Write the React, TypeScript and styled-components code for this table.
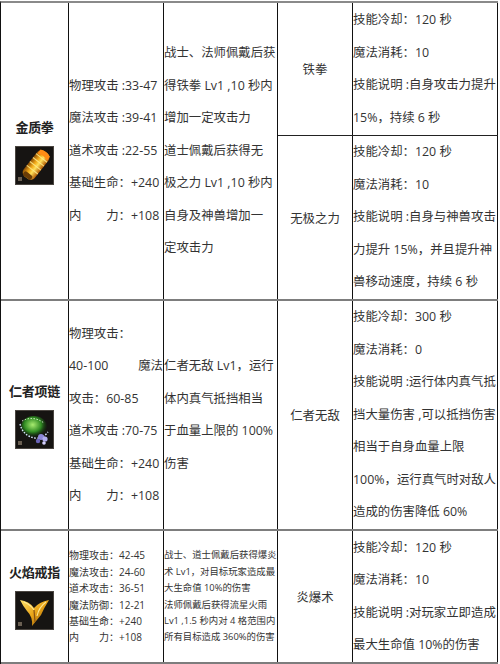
import styled, { createGlobalStyle } from 'styled-components';

const GlobalStyle = createGlobalStyle`
	html, body {
		margin: 0;
		padding: 0;
		background: #fff;
	}
	body {
		font-family: "Open Sans", "Noto Sans CJK SC", sans-serif;
		color: #333;
	}
`;

interface SkillInfo {
	name: string;
	height: number;
	lines: string[];
}

interface ItemInfo {
	name: string;
	icon: 'fist' | 'necklace' | 'ring';
	height: number;
	small?: boolean;
	stats: string[];
	effect: string[];
	skills: SkillInfo[];
}

const ITEMS: ItemInfo[] = [
	{
		name: '金质拳',
		icon: 'fist',
		height: 298,
		stats: ['物理攻击 :33-47', '魔法攻击 :39-41', '道术攻击 :22-55', '基础生命：+240', '内　　力：+108'],
		effect: [
			'战士、法师佩戴后获',
			'得铁拳 Lv1 ,10 秒内',
			'增加一定攻击力',
			'道士佩戴后获得无',
			'极之力 Lv1 ,10 秒内',
			'自身及神兽增加一',
			'定攻击力',
		],
		skills: [
			{
				name: '铁拳',
				height: 133,
				lines: ['技能冷却：120 秒', '魔法消耗：10', '技能说明 :自身攻击力提升', '15%，持续 6 秒'],
			},
			{
				name: '无极之力',
				height: 163,
				lines: [
					'技能冷却：120 秒',
					'魔法消耗：10',
					'技能说明 :自身与神兽攻击',
					'力提升 15%，并且提升神',
					'兽移动速度，持续 6 秒',
				],
			},
		],
	},
	{
		name: '仁者项链',
		icon: 'necklace',
		height: 230,
		stats: ['物理攻击：', '40-100|魔法', '攻击：60-85', '道术攻击 :70-75', '基础生命：+240', '内　　力：+108'],
		effect: ['仁者无敌 Lv1，运行', '体内真气抵挡相当', '于血量上限的 100%', '伤害'],
		skills: [
			{
				name: '仁者无敌',
				height: 228,
				lines: [
					'技能冷却：300 秒',
					'魔法消耗：0',
					'技能说明 :运行体内真气抵',
					'挡大量伤害 ,可以抵挡伤害',
					'相当于自身血量上限',
					'100%，运行真气时对敌人',
					'造成的伤害降低 60%',
				],
			},
		],
	},
	{
		name: '火焰戒指',
		icon: 'ring',
		height: 133,
		small: true,
		stats: ['物理攻击：42-45', '魔法攻击：24-60', '道术攻击：36-51', '魔法防御：12-21', '基础生命：+240', '内　　力：+108'],
		effect: [
			'战士、道士佩戴后获得爆炎',
			'术 Lv1，对目标玩家造成最',
			'大生命值 10%的伤害',
			'法师佩戴后获得流星火雨',
			'Lv1 ,1.5 秒内对 4 格范围内',
			'所有目标造成 360%的伤害',
		],
		skills: [
			{
				name: '炎爆术',
				height: 131,
				lines: ['技能冷却：120 秒', '魔法消耗：10', '技能说明 :对玩家立即造成', '最大生命值 10%的伤害'],
			},
		],
	},
];

const ItemIcon = ({ kind }: { kind: ItemInfo['icon'] }) => (
	<svg width="39" height="39" viewBox="0 0 39 39">
		<defs>
			<linearGradient id="gold" x1="0" y1="0" x2="1" y2="0">
				<stop offset="0" stopColor="#8a4e06" />
				<stop offset="0.35" stopColor="#f0a818" />
				<stop offset="0.6" stopColor="#ffe05a" />
				<stop offset="1" stopColor="#b45e08" />
			</linearGradient>
			<linearGradient id="ringGold" x1="0" y1="0" x2="1" y2="1">
				<stop offset="0" stopColor="#ffe36a" />
				<stop offset="0.5" stopColor="#e9a417" />
				<stop offset="1" stopColor="#8a5208" />
			</linearGradient>
			<radialGradient id="jade" cx="0.45" cy="0.4" r="0.6">
				<stop offset="0" stopColor="#a8ec70" />
				<stop offset="0.55" stopColor="#2f8a22" />
				<stop offset="1" stopColor="#0d2a0a" stopOpacity="0" />
			</radialGradient>
		</defs>
		<rect x="0.5" y="0.5" width="38" height="38" fill="#161412" stroke="#4a4540" />
		{kind === 'fist' && (
			<g transform="rotate(38 21 19)">
				<rect x="14" y="3" width="14" height="32" rx="5" fill="url(#gold)" />
				<path d="M14 10 H28 M14 15 H28 M14 20 H28 M14 25 H28" stroke="#ffec8c" strokeWidth="1.1" opacity="0.85" />
				<path d="M15 4 Q21 1 27 4 L27 9 Q21 6 15 9 Z" fill="#ff8c14" />
				<rect x="16" y="30" width="10" height="5" rx="2" fill="#6a3c06" />
			</g>
		)}
		{kind === 'necklace' && (
			<g>
				<ellipse cx="19" cy="17" rx="13" ry="11" fill="url(#jade)" />
				<path d="M5 14 Q8 26 20 28 Q28 29 33 22" stroke="#d8e8ff" strokeWidth="1.4" strokeDasharray="1.6 1.4" fill="none" />
				<path d="M7 11 Q18 5 29 13" stroke="#e8ffe0" strokeWidth="1" strokeDasharray="1.4 1.6" fill="none" />
				<circle cx="26" cy="27" r="3" fill="#8d86d8" />
				<circle cx="30" cy="29" r="2.6" fill="#b2aef0" />
				<circle cx="23" cy="31" r="2.2" fill="#6b64b8" />
				<circle cx="29" cy="33" r="1.8" fill="#d6d2ff" />
			</g>
		)}
		{kind === 'ring' && (
			<g>
				<path d="M5 9 Q14 10 19 17 Q24 11 34 9 Q29 17 26 24 L17 35 Q18 26 12 20 Q8 15 5 9 Z" fill="url(#ringGold)" />
				<path d="M9 11 Q16 14 19 19 M31 11 Q24 16 22 25" stroke="#fff2a8" strokeWidth="1.1" fill="none" opacity="0.85" />
				<path d="M19 19 L20 31" stroke="#8a5210" strokeWidth="1.2" />
			</g>
		)}
		<rect x="3" y="31" width="4" height="4" fill="#6a5f52" />
	</svg>
);

const App = () => (
	<>
		<GlobalStyle />
		<Table>
			{ITEMS.map((item) => (
				<ItemRow key={item.name} $height={item.height}>
					<NameCell>
						<ItemName>{item.name}</ItemName>
						<ItemIcon kind={item.icon} />
					</NameCell>
					<TextCell $width={95} $small={item.small}>
						{item.stats.map((line) =>
							line.includes('|') ? (
								<SpreadLine key={line}>
									{line.split('|').map((part) => (
										<span key={part}>{part}</span>
									))}
								</SpreadLine>
							) : (
								<Line key={line}>{line}</Line>
							),
						)}
					</TextCell>
					<TextCell $width={114} $small={item.small} $tight={item.small}>
						{item.effect.map((line) => (
							<Line key={line}>{line}</Line>
						))}
					</TextCell>
					<SkillStack>
						{item.skills.map((skill, i) => (
							<SkillRow key={skill.name} $height={skill.height} $divider={i < item.skills.length - 1}>
								<SkillName>{skill.name}</SkillName>
								<TextCell $width={145}>
									{skill.lines.map((line) => (
										<Line key={line}>{line}</Line>
									))}
								</TextCell>
							</SkillRow>
						))}
					</SkillStack>
				</ItemRow>
			))}
		</Table>
	</>
);

export default App;

const Table = styled.div`
	width: 498px;
	margin-top: 1px;
	display: flex;
	flex-direction: column;
	border-top: 2px solid #8a8a8a;
	border-left: 1px solid #111;
	box-sizing: border-box;
`;

const ItemRow = styled.div<{ $height: number }>`
	display: flex;
	height: ${(p) => p.$height}px;
	border-bottom: 2px solid #7d7d7d;
	box-sizing: border-box;
`;

const NameCell = styled.div`
	width: 68px;
	flex-shrink: 0;
	display: flex;
	flex-direction: column;
	align-items: center;
	justify-content: center;
	gap: 10px;
	border-right: 1px solid #111;
	box-sizing: border-box;
`;

const ItemName = styled.div`
	font-family: "Noto Sans CJK SC", sans-serif;
	font-size: 13px;
	font-weight: 700;
	line-height: 18px;
	color: #222;
	letter-spacing: -0.3px;
`;

const TextCell = styled.div<{ $width: number; $small?: boolean; $tight?: boolean }>`
	width: ${(p) => p.$width}px;
	flex-shrink: 0;
	display: flex;
	flex-direction: column;
	justify-content: center;
	overflow: hidden;
	border-right: 1px solid #111;
	box-sizing: border-box;
	font-size: ${(p) => (p.$small ? (p.$tight ? '9.4px' : '10px') : '12.4px')};
	line-height: ${(p) => (p.$small ? '16.4px' : '32.5px')};
	color: #333;
`;

const Line = styled.div`
	white-space: pre;
`;

const SpreadLine = styled.div`
	display: flex;
	justify-content: space-between;
	white-space: pre;
`;

const SkillStack = styled.div`
	display: flex;
	flex-direction: column;
	width: 220px;
	flex-shrink: 0;
`;

const SkillRow = styled.div<{ $height: number; $divider: boolean }>`
	display: flex;
	height: ${(p) => p.$height}px;
	box-sizing: border-box;
	border-bottom: ${(p) => (p.$divider ? '1px solid #222' : 'none')};
`;

const SkillName = styled.div`
	width: 75px;
	flex-shrink: 0;
	display: flex;
	align-items: center;
	justify-content: center;
	border-right: 1px solid #111;
	box-sizing: border-box;
	font-size: 12.4px;
	color: #333;
`;
